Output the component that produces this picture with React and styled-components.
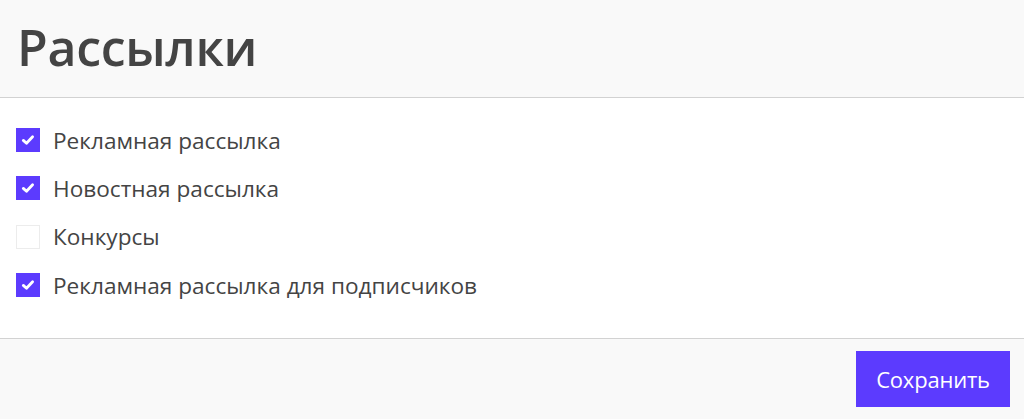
import React, { useState } from 'react';
import styled, { createGlobalStyle } from 'styled-components';

const GlobalStyle = createGlobalStyle`
    html, body {
        margin: 0;
        padding: 0;
        background: #ffffff;
        font-family: "Open Sans", "Noto Sans", sans-serif;
    }
`

const Page = styled.div`
    width: 1024px;
    height: 419px;
    display: flex;
    flex-direction: column;
    color: #444444;
`

const Header = styled.div`
    height: 97px;
    background: #f9f9f9;
    border-bottom: 1px solid #d2d2d2;
    display: flex;
    align-items: center;
    padding: 0 17px;
    box-sizing: content-box;
`

const Title = styled.h1`
    margin: 0;
    font-size: 50px;
    font-weight: 600;
    color: #444444;
    letter-spacing: -0.3px;
    line-height: 1;
    padding-bottom: 4px;
`

const Body = styled.div`
    flex: 1;
    background: #ffffff;
    padding: 18px 16px 0 16px;
    display: flex;
    flex-direction: column;
`

const Row = styled.label`
    height: 48.3px;
    display: flex;
    align-items: center;
    gap: 13px;
    font-size: 22.6px;
    cursor: pointer;
`

const Box = styled.span`
    width: 24px;
    height: 24px;
    flex: none;
    box-sizing: border-box;
    display: flex;
    align-items: center;
    justify-content: center;
    background: ${p => (p.$checked ? '#5c3bfe' : '#ffffff')};
    border: 1px solid ${p => (p.$checked ? '#5c3bfe' : '#ececec')};
`

const Footer = styled.div`
    height: 80px;
    background: #f9f9f9;
    border-top: 1px solid #d2d2d2;
    display: flex;
    justify-content: flex-end;
    align-items: center;
    padding: 0 14px;
`

const Button = styled.button`
    height: 56px;
    width: 154px;
    padding: 0;
    border: none;
    background: #5c3bfe;
    color: #ffffff;
    font-family: inherit;
    font-size: 22px;
    letter-spacing: -0.2px;
    cursor: pointer;
`

const Check = () => (
    <svg width="16" height="16" viewBox="0 0 16 16">
        <path d="M3.3 8.4 L6.5 11.3 L12.6 4.8" fill="none" stroke="#fff" strokeWidth="2.8" strokeLinecap="round" strokeLinejoin="round" />
    </svg>
)

const App = () => {
    const [items, setItems] = useState([
        { name: 'Рекламная рассылка', on: true },
        { name: 'Новостная рассылка', on: true },
        { name: 'Конкурсы', on: false },
        { name: 'Рекламная рассылка для подписчиков', on: true },
    ])

    const toggle = i => setItems(items.map((e, j) => (j === i ? { ...e, on: !e.on } : e)))

    return (
        <>
            <GlobalStyle />
            <Page>
                <Header>
                    <Title>Рассылки</Title>
                </Header>
                <Body>
                    {items.map((e, i) => (
                        <Row key={e.name} onClick={() => toggle(i)}>
                            <Box $checked={e.on}>{e.on && <Check />}</Box>
                            {e.name}
                        </Row>
                    ))}
                </Body>
                <Footer>
                    <Button>Сохранить</Button>
                </Footer>
            </Page>
        </>
    );
};

export default App;
